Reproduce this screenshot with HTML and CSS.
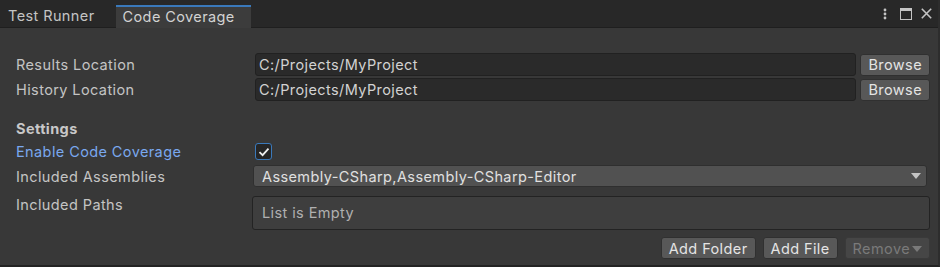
FILE: index.html
```html
<!DOCTYPE html>
<html>

<head>
    <title>Code Coverage</title>
    <link rel="stylesheet" href="styles.css">
</head>

<body>
    <div class="window">
        <div class="tab-bar">
            <div class="tab">Test Runner</div>
            <div class="tab active">Code Coverage</div>
            <div class="tab-tools">
                <svg width="4" height="12" viewBox="0 0 4 12"><circle cx="2" cy="2" r="1.4" fill="#c4c4c4"/><circle cx="2" cy="6" r="1.4" fill="#c4c4c4"/><circle cx="2" cy="10" r="1.4" fill="#c4c4c4"/></svg>
                <svg class="win-icon" width="12" height="12" viewBox="0 0 12 12"><rect x="0.5" y="0.5" width="11" height="11" fill="none" stroke="#c4c4c4"/><rect x="0" y="0" width="12" height="3" fill="#c4c4c4"/></svg>
                <svg width="11" height="11" viewBox="0 0 11 11"><path d="M0.8 0.8 L10.2 10.2 M10.2 0.8 L0.8 10.2" stroke="#c4c4c4" stroke-width="1.6"/></svg>
            </div>
        </div>

        <div class="content">
            <div class="row path-row">
                <label class="field-label">Results Location</label>
                <div class="text-field">C:/Projects/MyProject</div>
                <button class="btn">Browse</button>
            </div>
            <div class="row path-row second">
                <label class="field-label">History Location</label>
                <div class="text-field">C:/Projects/MyProject</div>
                <button class="btn">Browse</button>
            </div>

            <div class="section-title">Settings</div>

            <div class="row">
                <label class="field-label focused">Enable Code Coverage</label>
                <div class="checkbox">
                    <svg width="12" height="10" viewBox="0 0 12 10"><path d="M1.5 5.2 L4.6 8.2 L10.5 1.6" fill="none" stroke="#eeeeee" stroke-width="1.8"/></svg>
                </div>
            </div>
            <div class="row assemblies-row">
                <label class="field-label">Included Assemblies</label>
                <div class="dropdown">
                    <span>Assembly-CSharp,Assembly-CSharp-Editor</span>
                    <span class="arrow"></span>
                </div>
            </div>
            <div class="row paths-row">
                <label class="field-label">Included Paths</label>
                <div class="list-box">List is Empty</div>
            </div>
            <div class="list-buttons">
                <button class="btn">Add Folder</button>
                <button class="btn">Add File</button>
                <button class="btn disabled">Remove<span class="arrow small"></span></button>
            </div>
        </div>
    </div>
</body>

</html>
```
FILE: styles.css
```css
body {
    margin: 0;
    background-color: #383838;
    font-family: 'Inter', 'Noto Sans', sans-serif;
    font-size: 14.5px;
    letter-spacing: 0.4px;
    color: #c4c4c4;
}

.window {
    width: 940px;
    height: 267px;
    display: flex;
    flex-direction: column;
    box-sizing: border-box;
    border-bottom: 2px solid #232323;
    border-right: 2px solid #2d2d2d;
}

.tab-bar {
    height: 28px;
    background-color: #282828;
    border-bottom: 1px solid #1f1f1f;
    display: flex;
    align-items: flex-end;
    box-sizing: border-box;
}

.tab {
    height: 22px;
    line-height: 22px;
    padding: 0 8px;
    color: #c4c4c4;
}

.tab.active {
    margin-left: 13px;
    background-color: #3c3c3c;
    border-top: 2px solid #3a79bb;
    height: 21px;
    line-height: 19px;
    padding: 0 16px 0 7px;
    color: #d2d2d2;
    position: relative;
    top: 1px;
}

.tab-tools {
    margin-left: auto;
    align-self: center;
    display: flex;
    align-items: center;
    gap: 9px;
    padding-right: 6px;
}

.tab-tools .win-icon {
    margin-left: 4px;
}

.content {
    padding: 25px 8px 0 16px;
}

.row {
    display: flex;
    align-items: center;
}

.path-row.second {
    margin-top: 2px;
}

.field-label {
    width: 237px;
    flex-shrink: 0;
    line-height: 17px;
}

.field-label.focused {
    color: #7aa8ef;
}

.text-field {
    flex: 1;
    height: 23px;
    line-height: 21px;
    box-sizing: border-box;
    background-color: #2a2a2a;
    border: 1px solid #212121;
    border-radius: 3px;
    padding: 0 3px;
    margin-left: 2px;
    color: #d2d2d2;
}

.btn {
    font-family: inherit;
    font-size: 14.5px;
    letter-spacing: 0.4px;
    height: 22px;
    box-sizing: border-box;
    border: 1px solid #303030;
    border-radius: 3px;
    background-color: #585858;
    color: #e4e4e4;
    padding: 0 7px;
    margin-left: 4px;
}

.btn.disabled {
    background-color: #464646;
    border-color: #3a3a3a;
    color: #7a7a7a;
}

.section-title {
    font-weight: bold;
    color: #c8c8c8;
    line-height: 17px;
    margin: 19px 0 6px;
}

.checkbox {
    width: 15px;
    height: 15px;
    margin-left: 2px;
    border: 1px solid #3a79bb;
    border-radius: 3px;
    background-color: #262626;
    display: flex;
    align-items: center;
    justify-content: center;
}

.assemblies-row {
    margin-top: 5px;
}

.dropdown {
    flex: 1;
    height: 22px;
    box-sizing: border-box;
    background-color: #515151;
    border: 1px solid #2f2f2f;
    border-radius: 3px;
    display: flex;
    align-items: center;
    justify-content: space-between;
    padding: 0 5px 0 8px;
    margin-right: 3px;
    color: #e0e0e0;
}

.arrow {
    width: 0;
    height: 0;
    border-left: 5px solid transparent;
    border-right: 5px solid transparent;
    border-top: 6px solid #c4c4c4;
}

.arrow.small {
    display: inline-block;
    margin-left: 2px;
    vertical-align: 2px;
    border-top-color: #7a7a7a;
}

.paths-row {
    align-items: flex-start;
    margin-top: 9px;
}

.list-box {
    flex: 1;
    height: 34px;
    margin-left: -1px;
    box-sizing: border-box;
    background-color: #3e3e3e;
    border: 1px solid #232323;
    border-radius: 3px;
    padding: 0 9px;
    line-height: 32px;
    color: #b0b0b0;
}

.list-buttons {
    display: flex;
    justify-content: flex-end;
    gap: 7px;
    margin-top: 7px;
}

.list-buttons .btn {
    margin-left: 0;
}
```
